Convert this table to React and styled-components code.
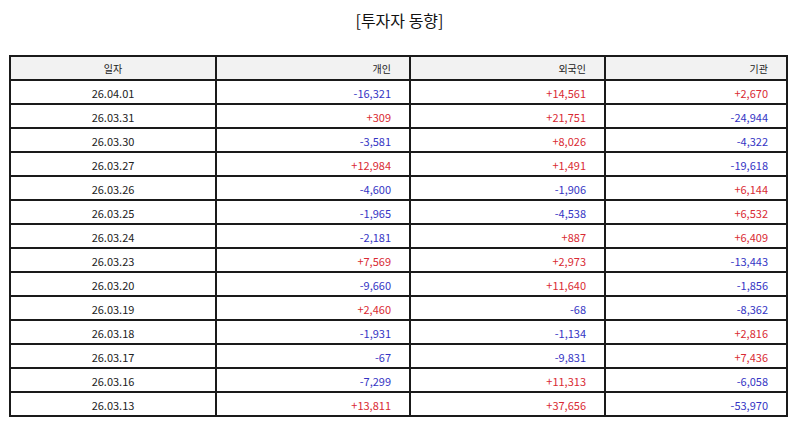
import React from "react";
import styled, { createGlobalStyle } from "styled-components";

const GlobalStyle = createGlobalStyle`
  html, body { margin: 0; padding: 0; background: #ffffff; }
  body { font-family: "Noto Sans CJK KR", "Noto Sans", sans-serif; color: #222; }
`;

const Page = styled.div`
  width: 794px;
  height: 425px;
  padding: 0 8px 0 9px;
  box-sizing: border-box;
  display: flex;
  flex-direction: column;
`;

const Title = styled.h1`
  margin: 10px 0 25px;
  font-size: 16px;
  line-height: 20px;
  font-weight: 400;
  text-align: center;
  color: #111;
  padding-left: 4px;
`;

const Grid = styled.div`
  display: grid;
  grid-template-columns: 206px 194px 195px 182px;
  width: max-content;
  border-left: 2px solid #1a1a1a;
  border-top: 2px solid #1a1a1a;
`;

const Cell = styled.div`
  height: 24px;
  box-sizing: border-box;
  border-right: 2px solid #1a1a1a;
  border-bottom: 2px solid #1a1a1a;
  display: flex;
  align-items: center;
  justify-content: ${(p) => (p.$center ? "center" : "flex-end")};
  padding-right: ${(p) => (p.$center ? "0" : "18px")};
  padding-top: 1px;
  font-size: ${(p) => (p.$head ? "10px" : "11px")};
  background: ${(p) => (p.$head ? "#f2f2f2" : "#fff")};
  color: ${(p) => (p.$tone === "up" ? "#d92a33" : p.$tone === "down" ? "#3434c4" : "#222")};
  white-space: nowrap;
`;

const rows = [
  ["26.04.01", "-16,321", "+14,561", "+2,670"],
  ["26.03.31", "+309", "+21,751", "-24,944"],
  ["26.03.30", "-3,581", "+8,026", "-4,322"],
  ["26.03.27", "+12,984", "+1,491", "-19,618"],
  ["26.03.26", "-4,600", "-1,906", "+6,144"],
  ["26.03.25", "-1,965", "-4,538", "+6,532"],
  ["26.03.24", "-2,181", "+887", "+6,409"],
  ["26.03.23", "+7,569", "+2,973", "-13,443"],
  ["26.03.20", "-9,660", "+11,640", "-1,856"],
  ["26.03.19", "+2,460", "-68", "-8,362"],
  ["26.03.18", "-1,931", "-1,134", "+2,816"],
  ["26.03.17", "-67", "-9,831", "+7,436"],
  ["26.03.16", "-7,299", "+11,313", "-6,058"],
  ["26.03.13", "+13,811", "+37,656", "-53,970"],
];

const tone = (v) => (v.startsWith("+") ? "up" : v.startsWith("-") ? "down" : undefined);

export default function App() {
  return (
    <>
      <GlobalStyle />
      <Page>
        <Title>[투자자 동향]</Title>
        <Grid>
          <Cell $head $center>일자</Cell>
          <Cell $head>개인</Cell>
          <Cell $head>외국인</Cell>
          <Cell $head>기관</Cell>
          {rows.map((r) => (
            <React.Fragment key={r[0]}>
              <Cell $center>{r[0]}</Cell>
              <Cell $tone={tone(r[1])}>{r[1]}</Cell>
              <Cell $tone={tone(r[2])}>{r[2]}</Cell>
              <Cell $tone={tone(r[3])}>{r[3]}</Cell>
            </React.Fragment>
          ))}
        </Grid>
      </Page>
    </>
  );
}
